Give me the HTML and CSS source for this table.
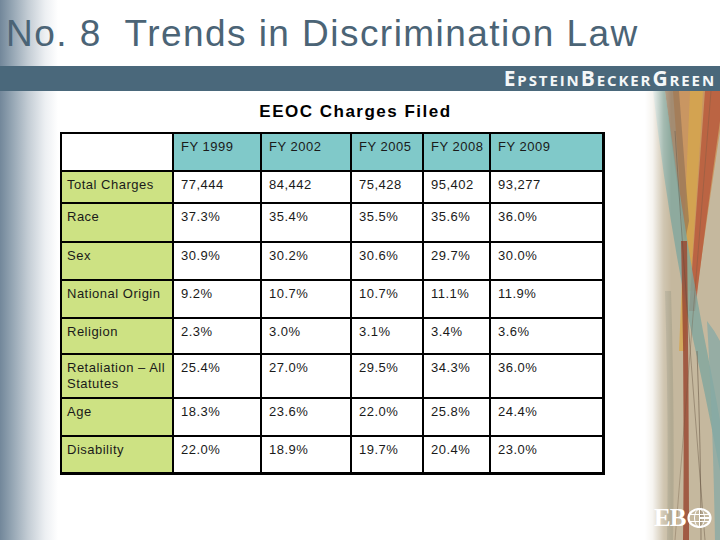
FILE: index.html
```html
<!DOCTYPE html>
<html lang="en">
<head>
<meta charset="utf-8">
<title>No. 8 Trends in Discrimination Law</title>
<link rel="stylesheet" href="styles.css">
</head>
<body>
<div class="slide">
  <header class="title-area">
    <h1 class="title">No. 8&nbsp; Trends in Discrimination Law</h1>
  </header>
  <div class="bar">
    <span class="brand">EpsteinBeckerGreen</span>
  </div>
  <div class="content">
    <main class="main">
      <h2 class="caption">EEOC Charges Filed</h2>
      <table class="data">
        <colgroup>
          <col class="c1"><col class="c2"><col class="c3"><col class="c4"><col class="c5"><col class="c6">
        </colgroup>
        <thead>
          <tr class="h38">
            <th class="blank"></th>
            <th>FY 1999</th><th>FY 2002</th><th>FY 2005</th><th>FY 2008</th><th>FY 2009</th>
          </tr>
        </thead>
        <tbody>
          <tr class="h32"><th>Total Charges</th><td>77,444</td><td>84,442</td><td>75,428</td><td>95,402</td><td>93,277</td></tr>
          <tr class="h39"><th>Race</th><td>37.3%</td><td>35.4%</td><td>35.5%</td><td>35.6%</td><td>36.0%</td></tr>
          <tr class="h38"><th>Sex</th><td>30.9%</td><td>30.2%</td><td>30.6%</td><td>29.7%</td><td>30.0%</td></tr>
          <tr class="h38"><th>National Origin</th><td>9.2%</td><td>10.7%</td><td>10.7%</td><td>11.1%</td><td>11.9%</td></tr>
          <tr class="h36"><th>Religion</th><td>2.3%</td><td>3.0%</td><td>3.1%</td><td>3.4%</td><td>3.6%</td></tr>
          <tr class="h44"><th>Retaliation – All<br>Statutes</th><td>25.4%</td><td>27.0%</td><td>29.5%</td><td>34.3%</td><td>36.0%</td></tr>
          <tr class="h38"><th>Age</th><td>18.3%</td><td>23.6%</td><td>22.0%</td><td>25.8%</td><td>24.4%</td></tr>
          <tr class="h37"><th>Disability</th><td>22.0%</td><td>18.9%</td><td>19.7%</td><td>20.4%</td><td>23.0%</td></tr>
        </tbody>
      </table>
    </main>
    <aside class="art">
      <svg class="ribbons" viewBox="0 0 75 449" preserveAspectRatio="none" aria-hidden="true">
        <defs>
          <linearGradient id="fade" x1="0" y1="0" x2="1" y2="0">
            <stop offset="0" stop-color="#fff" stop-opacity="1"/>
            <stop offset="0.1" stop-color="#fff" stop-opacity="0.85"/>
            <stop offset="0.25" stop-color="#fff" stop-opacity="0.2"/>
            <stop offset="0.35" stop-color="#fff" stop-opacity="0"/>
          </linearGradient>
        </defs>
        <rect x="0" y="0" width="75" height="449" fill="#c5b89e"/>
        <path d="M28 0 L75 0 L75 40 Q60 140 52 200 L40 200 Q36 100 28 0 Z" fill="#c98b4e" opacity="0.75"/>
        <path d="M45 0 L58 0 Q52 110 40 260 L34 260 Q40 120 45 0 Z" fill="#d6a64e" opacity="0.8"/>
        <path d="M60 0 L75 0 L75 30 Q62 120 50 220 L44 220 Q52 110 60 0 Z" fill="#b8573c" opacity="0.8"/>
        <path d="M20 0 L34 0 Q40 80 44 130 L40 150 Q30 80 20 0 Z" fill="#8c6e55" opacity="0.6"/>
        <path d="M8 0 L20 0 Q36 120 58 240 Q70 300 75 330 L75 380 Q60 300 44 230 Q22 120 8 0 Z" fill="#7fa69e" opacity="0.8"/>
        <path d="M36 150 Q40 300 38 449 L44 449 Q44 300 42 150 Z" fill="#9a4a34" opacity="0.85"/>
        <path d="M62 230 Q68 330 70 449 L75 449 L75 250 Q70 240 62 230 Z" fill="#86aaa6" opacity="0.75"/>
        <path d="M20 200 Q24 330 22 449 L28 449 Q30 330 26 200 Z" fill="#a5a08a" opacity="0.6"/>
        <path d="M52 260 Q56 360 56 449" stroke="#6b5a48" stroke-width="1" fill="none" opacity="0.6"/>
        <path d="M30 40 Q40 200 60 449" stroke="#5d4a3a" stroke-width="0.8" fill="none" opacity="0.5"/>
        <path d="M66 0 Q50 200 30 449" stroke="#6f5a44" stroke-width="0.8" fill="none" opacity="0.45"/>
        <rect x="0" y="0" width="75" height="449" fill="url(#fade)"/>
      </svg>
      <div class="ebg">
        <span class="ebg-text">EB</span>
        <svg class="globe" viewBox="0 0 24 20" aria-hidden="true">
          <ellipse cx="12" cy="10" rx="11" ry="9" fill="none" stroke="#fff" stroke-width="2.2"/>
          <ellipse cx="12" cy="10" rx="5" ry="9" fill="none" stroke="#fff" stroke-width="1"/>
          <line x1="12" y1="1" x2="12" y2="19" stroke="#fff" stroke-width="1"/>
          <line x1="2" y1="6.5" x2="22" y2="6.5" stroke="#fff" stroke-width="1"/>
          <line x1="1.5" y1="13.5" x2="22.5" y2="13.5" stroke="#fff" stroke-width="1"/>
          <line x1="12" y1="10" x2="23" y2="10" stroke="#fff" stroke-width="2"/>
        </svg>
      </div>
    </aside>
  </div>
</div>
</body>
</html>
```
FILE: styles.css
```css
html, body {
  margin: 0;
  padding: 0;
  background: #fff;
}

body {
  font-family: "Liberation Sans", Arial, sans-serif;
}

.slide {
  width: 720px;
  height: 540px;
  display: flex;
  flex-direction: column;
  overflow: hidden;
  background:
    linear-gradient(to right, #72879a 0px, #94a5b3 12px, #c3ccd4 28px, #eceff2 45px, #ffffff 58px) no-repeat left top / 60px 100%,
    #fff;
}

.title-area {
  height: 66px;
  box-sizing: border-box;
  padding: 13px 0 0 6px;
  flex: none;
}

.title {
  margin: 0;
  font-size: 37px;
  font-weight: normal;
  line-height: 42px;
  letter-spacing: 1.45px;
  color: #4b6476;
  white-space: nowrap;
}

.bar {
  flex: none;
  height: 25px;
  background: #4a687b;
  display: flex;
  justify-content: flex-end;
  align-items: center;
  padding-right: 4px;
}

.brand {
  color: #f4f7f8;
  font-family: "Open Sans", "Liberation Sans", sans-serif;
  font-weight: 700;
  font-size: 21px;
  line-height: 25px;
  font-variant: small-caps;
  letter-spacing: 1.9px;
}

.content {
  flex: 1;
  display: flex;
  min-height: 0;
}

.main {
  flex: 1;
  padding-left: 60px;
}

.caption {
  margin: 0;
  padding: 11px 0 0 6px;
  text-align: center;
  font-size: 17px;
  line-height: 20px;
  letter-spacing: 1.5px;
  font-weight: bold;
  color: #000;
}

.data {
  margin-top: 10px;
  border-collapse: collapse;
  table-layout: fixed;
  width: 542px;
  border: 2px solid #000;
  border-right-width: 3px;
  border-bottom-width: 3px;
  font-size: 13px;
  line-height: 16px;
  letter-spacing: 0.5px;
  color: #1a1a1a;
}

.c1 { width: 112px; }
.c2 { width: 88px; }
.c3 { width: 90px; }
.c4 { width: 72px; }
.c5 { width: 67px; }
.c6 { width: 113px; }

.data th,
.data td {
  border: 2px solid #000;
  padding: 5px 3px 0 7px;
  vertical-align: top;
  text-align: left;
  font-weight: normal;
  white-space: nowrap;
}

.data thead th {
  background: #80c9c9;
}

.data thead th.blank {
  background: #fff;
}

.data tbody th {
  background: #cde283;
  padding-left: 5px;
}

.data td {
  background: #fff;
}

.h32 { height: 32px; }
.h36 { height: 36px; }
.h37 { height: 37px; }
.h38 { height: 38px; }
.h39 { height: 39px; }
.h44 { height: 44px; }

.art {
  flex: none;
  width: 75px;
  position: relative;
  display: flex;
  flex-direction: column;
  justify-content: flex-end;
}

.ribbons {
  position: absolute;
  inset: 0;
  width: 100%;
  height: 100%;
  z-index: 0;
}

.ebg {
  position: relative;
  z-index: 1;
  display: flex;
  align-items: center;
  padding: 0 0 10px 9px;
}

.ebg-text {
  font-family: "Liberation Serif", "Times New Roman", serif;
  font-weight: bold;
  font-size: 25px;
  line-height: 24px;
  color: #fff;
  letter-spacing: -1px;
}

.globe {
  width: 25px;
  height: 20px;
  margin-left: 2px;
}
```
